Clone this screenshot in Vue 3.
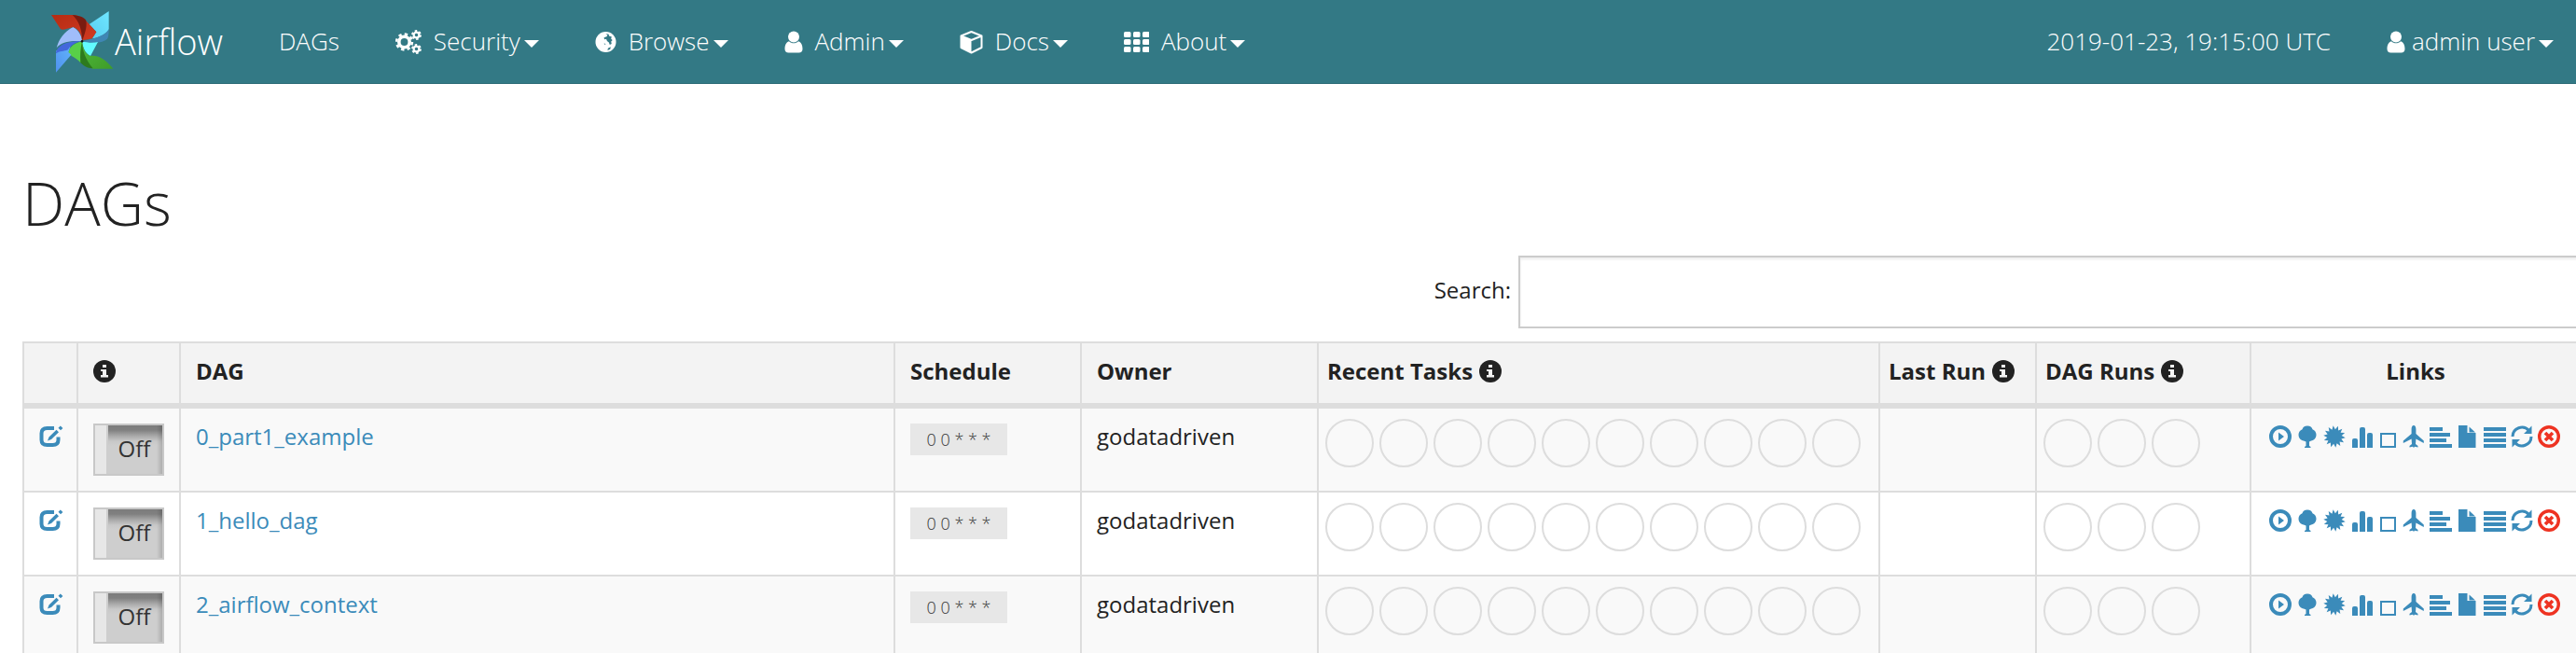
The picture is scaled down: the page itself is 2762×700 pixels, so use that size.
<script setup>
import { ref } from 'vue'

const menus = [
  { label: 'Security', icon: 'gears' },
  { label: 'Browse', icon: 'globe' },
  { label: 'Admin', icon: 'user' },
  { label: 'Docs', icon: 'cube' },
  { label: 'About', icon: 'grid' },
]

const dags = ref([
  { id: '0_part1_example', schedule: '0 0 * * *', owner: 'godatadriven', active: false },
  { id: '1_hello_dag', schedule: '0 0 * * *', owner: 'godatadriven', active: false },
  { id: '2_airflow_context', schedule: '0 0 * * *', owner: 'godatadriven', active: false },
])

const links = [
  'Trigger', 'Tree', 'Graph', 'Duration', 'Tries', 'Landing',
  'Gantt', 'Code', 'Logs', 'Refresh', 'Delete',
]

const search = ref('')

// Alternating outer and inner radii give the spiked badge of the graph link.
const burst = Array.from({ length: 28 }, (_, i) => {
  const r = i % 2 ? 7.8 : 11.8
  const a = (i * Math.PI) / 14 + 0.11
  return `${(12 + r * Math.cos(a)).toFixed(2)},${(12 + r * Math.sin(a)).toFixed(2)}`
}).join(' ')
</script>

<template>
  <header class="navbar">
    <a class="brand" href="#">
      <svg class="logo" viewBox="15 33 204 204" aria-hidden="true">
        <defs>
          <linearGradient id="red" x1="0" y1="0" x2="1" y2="1">
            <stop offset="0" stop-color="#b52c12" /><stop offset="1" stop-color="#d23a22" />
          </linearGradient>
          <linearGradient id="cyan" x1="1" y1="0" x2="0" y2="1">
            <stop offset="0" stop-color="#6fe6ff" /><stop offset="1" stop-color="#58cdf0" />
          </linearGradient>
          <linearGradient id="green" x1="0" y1="0" x2="1" y2="1">
            <stop offset="0" stop-color="#4eb83a" /><stop offset="1" stop-color="#3f9c28" />
          </linearGradient>
          <linearGradient id="azure" x1="1" y1="0" x2="0" y2="1">
            <stop offset="0" stop-color="#62b2fb" /><stop offset="1" stop-color="#4f92ef" />
          </linearGradient>
        </defs>
        <path fill="url(#cyan)" d="M203 36 140 78 163 103 150 124C176 120 196 108 203 94Z" />
        <path fill="#3f86b4" d="M203 94C196 110 172 122 117 133 150 142 188 138 199 124 203 115 203 104 203 94Z" />
        <path fill="#62fbff" d="M117 133C135 138 155 139 168 135L144 180C130 174 120 158 117 133Z" />
        <path fill="url(#green)" d="M117 133C120 158 128 174 144 180 172 176 196 196 217 221H150C124 212 108 180 117 133Z" />
        <path fill="#2d7a1e" d="M117 133C118 160 126 190 152 220 128 220 114 204 104 192 106 170 110 150 117 133Z" />
        <path fill="#58cf48" d="M117 133C92 138 78 150 72 170 82 182 100 186 112 202 110 178 112 155 117 133Z" />
        <path fill="url(#azure)" d="M33 233V163C52 164 66 160 80 148L73 168 82 176Z" />
        <path fill="#4468dc" d="M33 172C34 152 60 130 117 133 92 136 78 148 72 160 58 166 44 164 33 172Z" />
        <path fill="#a0bdfa" d="M88 87C60 102 42 126 35 154 50 136 76 130 117 133 117 115 104 96 88 87Z" />
        <path fill="url(#red)" d="M18 48H92C120 50 146 84 163 103L149 124C130 130 118 126 117 133 117 115 108 94 88 87 70 92 56 98 48 94Z" />
        <path fill="#7a1c10" d="M86 48C108 50 122 54 130 66 134 90 124 112 117 133 118 96 106 66 86 48Z" />
        <circle cx="117" cy="133" r="4" fill="#111" />
      </svg>
      <span>Airflow</span>
    </a>
    <nav class="menu" aria-label="Main">
      <a href="#">DAGs</a>
      <button v-for="m in menus" :key="m.label" type="button">
        <svg v-if="m.icon === 'gears'" width="28" height="26" viewBox="0 0 28 26" aria-hidden="true">
          <g fill="none" stroke="#fff">
            <circle cx="9.500" cy="13" r="5.700" stroke-width="3.600" />
            <circle cx="9.500" cy="13" r="8.400" stroke-width="2.600" stroke-dasharray="3.4 3.197" />
            <circle cx="22.500" cy="5.500" r="2.900" stroke-width="2.200" />
            <circle cx="22.500" cy="5.500" r="4.500" stroke-width="1.800" stroke-dasharray="2.500 2.212" />
            <circle cx="22.500" cy="20.500" r="2.900" stroke-width="2.200" />
            <circle cx="22.500" cy="20.500" r="4.500" stroke-width="1.800" stroke-dasharray="2.500 2.212" />
          </g>
        </svg>
        <svg v-else-if="m.icon === 'globe'" width="23" height="24" viewBox="0 0 24 24" aria-hidden="true">
          <circle cx="12" cy="12" r="11.500" fill="#fff" />
          <path fill="#337985" d="M12 3 14 4.500 13 6 10 7 10.500 9 12.500 8.500 13.500 11 15.500 12.500 16.500 15 18.500 14 18 11.500 19.500 10 18 8.500 18.500 6 16 5.500 15 3ZM14.500 19 17.500 17.500 17 20 14 21.500ZM10 13 12 14.500 11 15Z" />
        </svg>
        <svg v-else-if="m.icon === 'user'" width="20" height="24" viewBox="0 0 20 24" aria-hidden="true">
          <circle cx="10" cy="6.500" r="6" fill="#fff" />
          <path fill="#fff" d="M5 11.300C1.500 12.500.5 16 .5 19.500.5 22 2 23.500 4.500 23.500H15.500C18 23.500 19.500 22 19.500 19.500 19.500 16 18.500 12.500 15 11.300 12 14 8 14 5 11.300Z" />
        </svg>
        <svg v-else-if="m.icon === 'cube'" width="25" height="26" viewBox="0 0 25 26" aria-hidden="true">
          <path fill="none" stroke="#fff" stroke-width="2" stroke-linejoin="round" d="M12.500 2 23.500 6.500V19L12.500 24.500 1.500 19V6.500ZM1.500 6.500 12.500 11 23.500 6.500" />
          <path fill="#fff" d="M1.500 6.500 12.500 11V24.500L1.500 19Z" />
        </svg>
        <svg v-else width="27" height="22" viewBox="0 0 27 22" aria-hidden="true">
          <g fill="#fff">
            <template v-for="r in 3" :key="r">
              <rect v-for="c in 3" :key="c" :x="(c - 1) * 10" :y="(r - 1) * 8" width="7.500" height="6" rx="1.500" />
            </template>
          </g>
        </svg>
        <span>{{ m.label }}<i class="caret"></i></span>
      </button>
    </nav>
    <div class="menu session">
      <a href="#">2019-01-23, 19:15:00 UTC</a>
      <button type="button" class="account">
        <svg width="20" height="24" viewBox="0 0 20 24" aria-hidden="true">
          <circle cx="10" cy="6.500" r="6" fill="#fff" />
          <path fill="#fff" d="M5 11.300C1.500 12.500.5 16 .5 19.500.5 22 2 23.500 4.500 23.500H15.500C18 23.500 19.500 22 19.500 19.500 19.500 16 18.500 12.500 15 11.300 12 14 8 14 5 11.300Z" />
        </svg>
        <span>admin user<i class="caret"></i></span>
      </button>
    </div>
  </header>

  <main class="page">
    <h1>DAGs</h1>
    <div class="filter">
      <label for="dag-search">Search:</label>
      <input id="dag-search" v-model="search" type="search" />
    </div>

    <table class="dags">
      <colgroup>
        <col class="c-edit" /><col class="c-toggle" /><col /><col class="c-schedule" /><col class="c-owner" />
        <col class="c-tasks" /><col class="c-last" /><col class="c-runs" /><col class="c-links" />
      </colgroup>
      <thead>
        <tr>
          <th></th>
          <th>
            <svg class="info" viewBox="0 0 24 24" role="img" aria-label="Pause or resume">
              <circle cx="12" cy="12" r="12" /><path fill="#f3f3f3" d="M10 5H14V8H10ZM8 10H14V16H16V18.500H8V16H10V12H8Z" />
            </svg>
          </th>
          <th>DAG</th>
          <th>Schedule</th>
          <th>Owner</th>
          <th v-for="h in ['Recent Tasks', 'Last Run', 'DAG Runs']" :key="h" class="tight">
            <span class="head">{{ h }}
              <svg class="info" viewBox="0 0 24 24" aria-hidden="true">
                <circle cx="12" cy="12" r="12" /><path fill="#f3f3f3" d="M10 5H14V8H10ZM8 10H14V16H16V18.500H8V16H10V12H8Z" />
              </svg>
            </span>
          </th>
          <th class="center">Links</th>
        </tr>
      </thead>
      <tbody>
        <tr v-for="dag in dags" :key="dag.id">
          <td class="edit">
            <a href="#" :aria-label="'Edit ' + dag.id">
              <svg width="26" height="24" viewBox="0 0 26 24" aria-hidden="true">
                <path fill="none" stroke="#3b8bba" stroke-width="4" d="M16 3H8.500C4.500 3 2.500 5 2.500 8.500V15.500C2.500 19.500 4.500 21 8.500 21H14.500C18.500 21 20.500 19.500 20.500 15.500V12.500" />
                <path fill="#3b8bba" d="M9 16.500 10.500 12.500 18.500 4.800 21 7.200 13 15ZM20.500 2.800 22.800.6 25.400 3 23 5.200Z" />
              </svg>
            </a>
          </td>
          <td>
            <label class="toggle">
              <input v-model="dag.active" type="checkbox" :aria-label="'Run ' + dag.id" />
              <span class="handle"></span><span class="state">{{ dag.active ? 'On' : 'Off' }}</span>
            </label>
          </td>
          <td><a href="#">{{ dag.id }}</a></td>
          <td><a class="schedule" href="#">{{ dag.schedule }}</a></td>
          <td>{{ dag.owner }}</td>
          <td class="rings"><div><i v-for="n in 10" :key="n"></i></div></td>
          <td></td>
          <td class="rings"><div><i v-for="n in 3" :key="n"></i></div></td>
          <td>
            <div class="links">
              <a v-for="l in links" :key="l" href="#" :class="l.toLowerCase()" :aria-label="l + ' ' + dag.id">
                <svg viewBox="0 0 24 24" aria-hidden="true">
                  <template v-if="l === 'Trigger'">
                    <circle class="line" cx="12" cy="12" r="10" stroke-width="4" /><path d="M10 7.500 16 12 10 16.500Z" />
                  </template>
                  <path v-else-if="l === 'Tree'" d="M12 .5C15 .5 17 2 17.500 4.200 20 5 21.500 7.500 21.500 10 21.500 13.500 19 16 16 16.500L14 17.500V22L15.500 23V24H9V23L10.500 22V17.500L8 16.500C5 16 2.500 13.500 2.500 10 2.500 7.500 4 5 6.500 4.200 7 2 9 .5 12 .5Z" />
                  <polygon v-else-if="l === 'Graph'" :points="burst" />
                  <path v-else-if="l === 'Duration'" d="M2 24V16Q2 14 4 14H6Q8 14 8 16V24ZM10 24V4Q10 2 12 2H14Q16 2 16 4V24ZM18 24V10Q18 8 20 8H22Q24 8 24 10V24Z" />
                  <rect v-else-if="l === 'Tries'" class="line" x="4" y="9" width="15" height="14" stroke-width="2" />
                  <path v-else-if="l === 'Landing'" d="M12 0C13.600 0 14.400 2 14.400 4V9L22.800 16.500V19L14.400 14.500 14 20 16.500 22V23.500L13 22.800 12 24 11 22.800 7.500 23.500V22L10 20 9.600 14.500.8 19V16.500L9.600 9V4C9.600 2 10.400 0 12 0Z" />
                  <path v-else-if="l === 'Gantt'" d="M0 2H14V6H0ZM0 8H22V12H0ZM0 14H18V18H0ZM0 20H24V24H0Z" />
                  <path v-else-if="l === 'Code'" d="M2 0H11.500V8H20.500V24H2ZM13.500 1.500 20 7.500H13.500Z" />
                  <path v-else-if="l === 'Logs'" d="M0 2H24V6H0ZM0 8H24V12H0ZM0 14H24V18H0ZM0 20H24V24H0Z" />
                  <template v-else-if="l === 'Refresh'">
                    <path class="line" stroke-width="3" d="M2 12A10 10 0 0 1 19.500 5.500M22 12A10 10 0 0 1 4.500 18.500" />
                    <path d="M22.500.5V9H14ZM1.500 23.500V15H10Z" />
                  </template>
                  <template v-else>
                    <circle class="line" cx="12" cy="12" r="10.300" stroke-width="3.400" />
                    <path class="line" stroke-width="3.600" d="M8 8 16 16M16 8 8 16" />
                  </template>
                </svg>
              </a>
            </div>
          </td>
        </tr>
      </tbody>
    </table>
  </main>
</template>

<style>
body {
  background: #fff;
  overflow: hidden;
}
</style>

<style scoped>
.navbar,
.page {
  box-sizing: border-box;
  font-family: "Open Sans", "Noto Sans", sans-serif;
  color: #222;
}
a {
  color: #3b8bba;
  text-decoration: none;
}
button {
  border: 0;
  padding: 0;
  background: none;
  font: inherit;
  color: inherit;
}
svg {
  display: block;
  flex: none;
}
.navbar {
  display: flex;
  align-items: center;
  height: 90px;
  padding: 0 24px 0 54px;
  border-bottom: 1px solid #2b6a75;
  background: #337985;
  font-size: 26px;
  font-weight: 300;
  line-height: 36px;
  white-space: nowrap;
}
.navbar a,
.navbar button {
  color: #fff;
}
.brand {
  display: flex;
  align-items: center;
  gap: 1px;
  margin-right: 60px;
  font-size: 38px;
}
.logo {
  width: 68px;
  height: 68px;
}
.menu {
  display: flex;
  align-items: center;
  gap: 60px;
}
.menu button {
  display: flex;
  align-items: center;
  gap: 13px;
}
.menu > a,
.menu span,
.brand span {
  padding-bottom: 2px;
}
.menu .account {
  gap: 7px;
}
.session {
  margin-left: auto;
}
.caret {
  display: inline-block;
  margin-left: 4px;
  vertical-align: middle;
  border: 8px solid transparent;
  border-top-color: #fff;
  border-bottom: 0;
}
.page {
  padding: 80px 0 0 24px;
  overflow: hidden;
  font-size: 24px;
  line-height: 28px;
}
h1 {
  margin: 0;
  padding: 0 0 8px 0;
  font-size: 64px;
  line-height: 96px;
  font-weight: 300;
}
.filter {
  display: flex;
  align-items: center;
  justify-content: flex-end;
  gap: 8px;
  margin-right: -6px;
  padding-bottom: 14px;
}
.filter label {
  padding-bottom: 4px;
}
.filter input {
  box-sizing: border-box;
  width: 1140px;
  height: 78px;
  margin: 0;
  padding: 16px 24px;
  border: 2px solid #ccc;
  border-radius: 0;
  background: #fff;
  box-shadow: inset 0 2px 3px rgba(0, 0, 0, 0.08);
  font: inherit;
  appearance: none;
}
.dags {
  width: calc(100% + 6px);
  table-layout: fixed;
  border-collapse: separate;
  border-spacing: 0;
  border: solid #ddd;
  border-width: 2px 0 0 2px;
}
.c-edit { width: 58px; }
.c-toggle { width: 110px; }
.c-schedule { width: 200px; }
.c-owner { width: 254px; }
.c-tasks { width: 602px; }
.c-last { width: 168px; }
.c-runs { width: 230px; }
.c-links { width: 354px; }
th,
td {
  box-sizing: border-box;
  padding: 16px;
  border: solid #ddd;
  border-width: 0 2px 2px 0;
  vertical-align: top;
  text-align: left;
}
th {
  height: 70px;
  border-bottom-width: 6px;
  background: #f3f3f3;
  font-weight: 700;
  white-space: nowrap;
}
th.tight {
  padding: 16px 9px;
}
th.center {
  text-align: center;
}
.head {
  display: flex;
  align-items: center;
  gap: 7px;
}
.info {
  width: 24px;
  height: 24px;
  margin: 2px 0;
  fill: #222;
}
td {
  height: 90px;
}
tbody tr:nth-child(odd) td {
  background: #f9f9f9;
}
.edit a {
  display: block;
  padding: 2px 0;
}
.toggle {
  position: relative;
  display: flex;
  box-sizing: border-box;
  width: 76px;
  height: 56px;
  border: 2px solid #c8c8c8;
  background: #cecece;
}
.toggle input {
  position: absolute;
  inset: 0;
  width: 100%;
  height: 100%;
  margin: 0;
  opacity: 0;
}
.handle {
  width: 12px;
  margin-right: 2px;
  background: #e7e7e7;
}
.state {
  flex: 1;
  padding-right: 2px;
  background:
    linear-gradient(to left, rgba(0, 0, 0, 0.16), transparent 6px),
    linear-gradient(#7c7c7c, #808080 5px, #adadad 12px, #c8c8c8 17px, #cecece 22px);
  color: #333;
  line-height: 50px;
  text-align: center;
}
.schedule {
  display: block;
  width: 104px;
  background: #e7e7e7;
  color: #333;
  font-size: 18px;
  font-weight: 300;
  line-height: 34px;
  text-align: center;
}
td.rings {
  padding: 11px 7px;
}
.rings div {
  display: flex;
  gap: 6px;
}
.rings i {
  box-sizing: border-box;
  width: 52px;
  height: 52px;
  border: 2px solid #ddd;
  border-radius: 50%;
}
.links {
  display: flex;
  gap: 5px;
  padding: 2px 3px;
}
.links a {
  width: 24px;
  height: 24px;
}
.links .tries {
  width: 22px;
}
.links svg {
  width: 100%;
  height: 24px;
  fill: #3b8bba;
  stroke: none;
}
.links .tries svg {
  width: 24px;
}
.links .line {
  fill: none;
  stroke: #3b8bba;
}
.links .delete .line {
  stroke: #ee3322;
}
</style>
